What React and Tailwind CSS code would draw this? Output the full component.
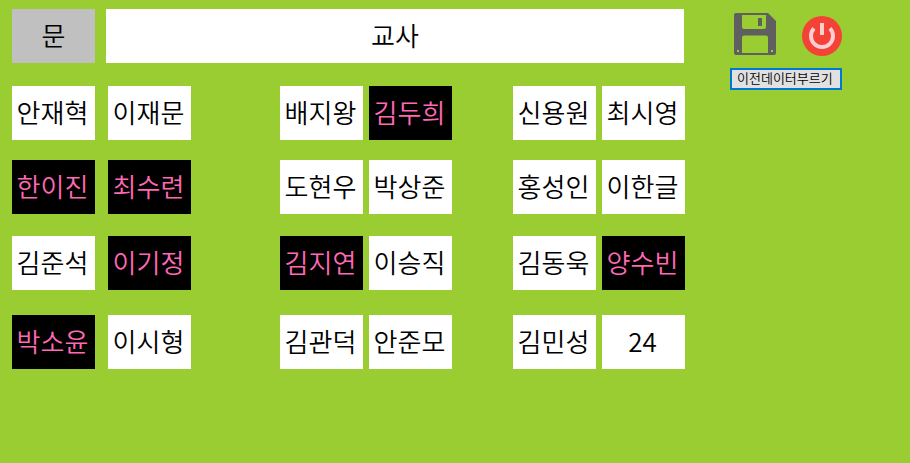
const ROWS = [
  {
    spacing: "mt-[23px]",
    seats: [["안재혁"], ["이재문"], ["배지왕"], ["김두희", true], ["신용원"], ["최시영"]],
  },
  {
    spacing: "mt-5",
    seats: [["한이진", true], ["최수련", true], ["도현우"], ["박상준"], ["홍성인"], ["이한글"]],
  },
  {
    spacing: "mt-[22px]",
    seats: [["김준석"], ["이기정", true], ["김지연", true], ["이승직"], ["김동욱"], ["양수빈", true]],
  },
  {
    spacing: "mt-[25px]",
    seats: [["박소윤", true], ["이시형"], ["김관덕"], ["안준모"], ["김민성"], ["24"]],
  },
];

const COLUMNS = [
  "col-start-1",
  "col-start-3",
  "col-start-5",
  "col-start-7",
  "col-start-9",
  "col-start-11",
];

function Seat({ name, selected, column }) {
  const colors = selected ? "bg-black text-[#ff69b4]" : "bg-white text-black";
  return (
    <button
      type="button"
      aria-pressed={Boolean(selected)}
      className={`${column} ${colors} flex h-[54px] items-center justify-center pr-0.5 pb-0.5 whitespace-nowrap`}
    >
      {name}
    </button>
  );
}

function SaveIcon() {
  return (
    <svg viewBox="0 0 42 42" className="block size-[42px]" aria-hidden="true">
      <path
        fillRule="evenodd"
        fill="#5f5f5f"
        d="M2 0H34L42 8V40a2 2 0 0 1-2 2H2a2 2 0 0 1-2-2V2a2 2 0 0 1 2-2ZM8 2V14a2 2 0 0 0 2 2H30a2 2 0 0 0 2-2V2ZM10 22.5a2 2 0 0 0-2 2V40H34V24.5a2 2 0 0 0-2-2ZM3 37v2h2v-2ZM37 37v2h2v-2Z"
      />
      <path fill="#5f5f5f" d="M24 5h4v8h-4z" />
    </svg>
  );
}

function PowerIcon() {
  return (
    <svg viewBox="0 0 40 40" className="block size-10" aria-hidden="true">
      <circle cx="20" cy="20" r="20" fill="#f44336" />
      <path d="M12 12.45a11 11 0 1 0 16 0" fill="none" stroke="#ffcdd2" strokeWidth="4" />
      <path d="M18 7h4v12h-4z" fill="#ffcdd2" />
    </svg>
  );
}

export default function App() {
  return (
    <div className="flex min-h-screen items-start gap-[45px] bg-[#9acd32] pt-[9px] pr-[68px] pl-3 font-['Noto_Sans_CJK_KR',sans-serif] text-[26px] leading-8 font-[350] text-black">
      <main className="min-w-0 flex-1">
        <div className="grid grid-cols-[83fr_11fr_578fr_1fr]">
          <div className="flex h-[54px] items-center justify-center bg-[#c0c0c0] pb-0.5">문</div>
          <div className="col-start-3 flex h-[54px] items-center justify-center bg-white pb-0.5">교사</div>
        </div>
        {ROWS.map((row) => (
          <div
            key={row.spacing}
            className={`${row.spacing} grid grid-cols-[83fr_13fr_83fr_89fr_83fr_6fr_83fr_61fr_83fr_6fr_83fr]`}
          >
            {row.seats.map(([name, selected], i) => (
              <Seat key={name} name={name} selected={selected} column={COLUMNS[i]} />
            ))}
          </div>
        ))}
      </main>
      <aside className="w-28 shrink-0 pt-1">
        <div className="flex h-[43px] items-start justify-between pl-1">
          <button type="button" aria-label="저장">
            <SaveIcon />
          </button>
          <button type="button" aria-label="종료" className="self-end">
            <PowerIcon />
          </button>
        </div>
        <button
          type="button"
          className="mt-3 flex h-[22px] w-full items-center border-2 border-[#0078d7] bg-[#e1e1e1] pb-0.5 pl-[5px] text-[13px] leading-4 whitespace-nowrap"
        >
          이전데이터부르기
        </button>
      </aside>
    </div>
  );
}
